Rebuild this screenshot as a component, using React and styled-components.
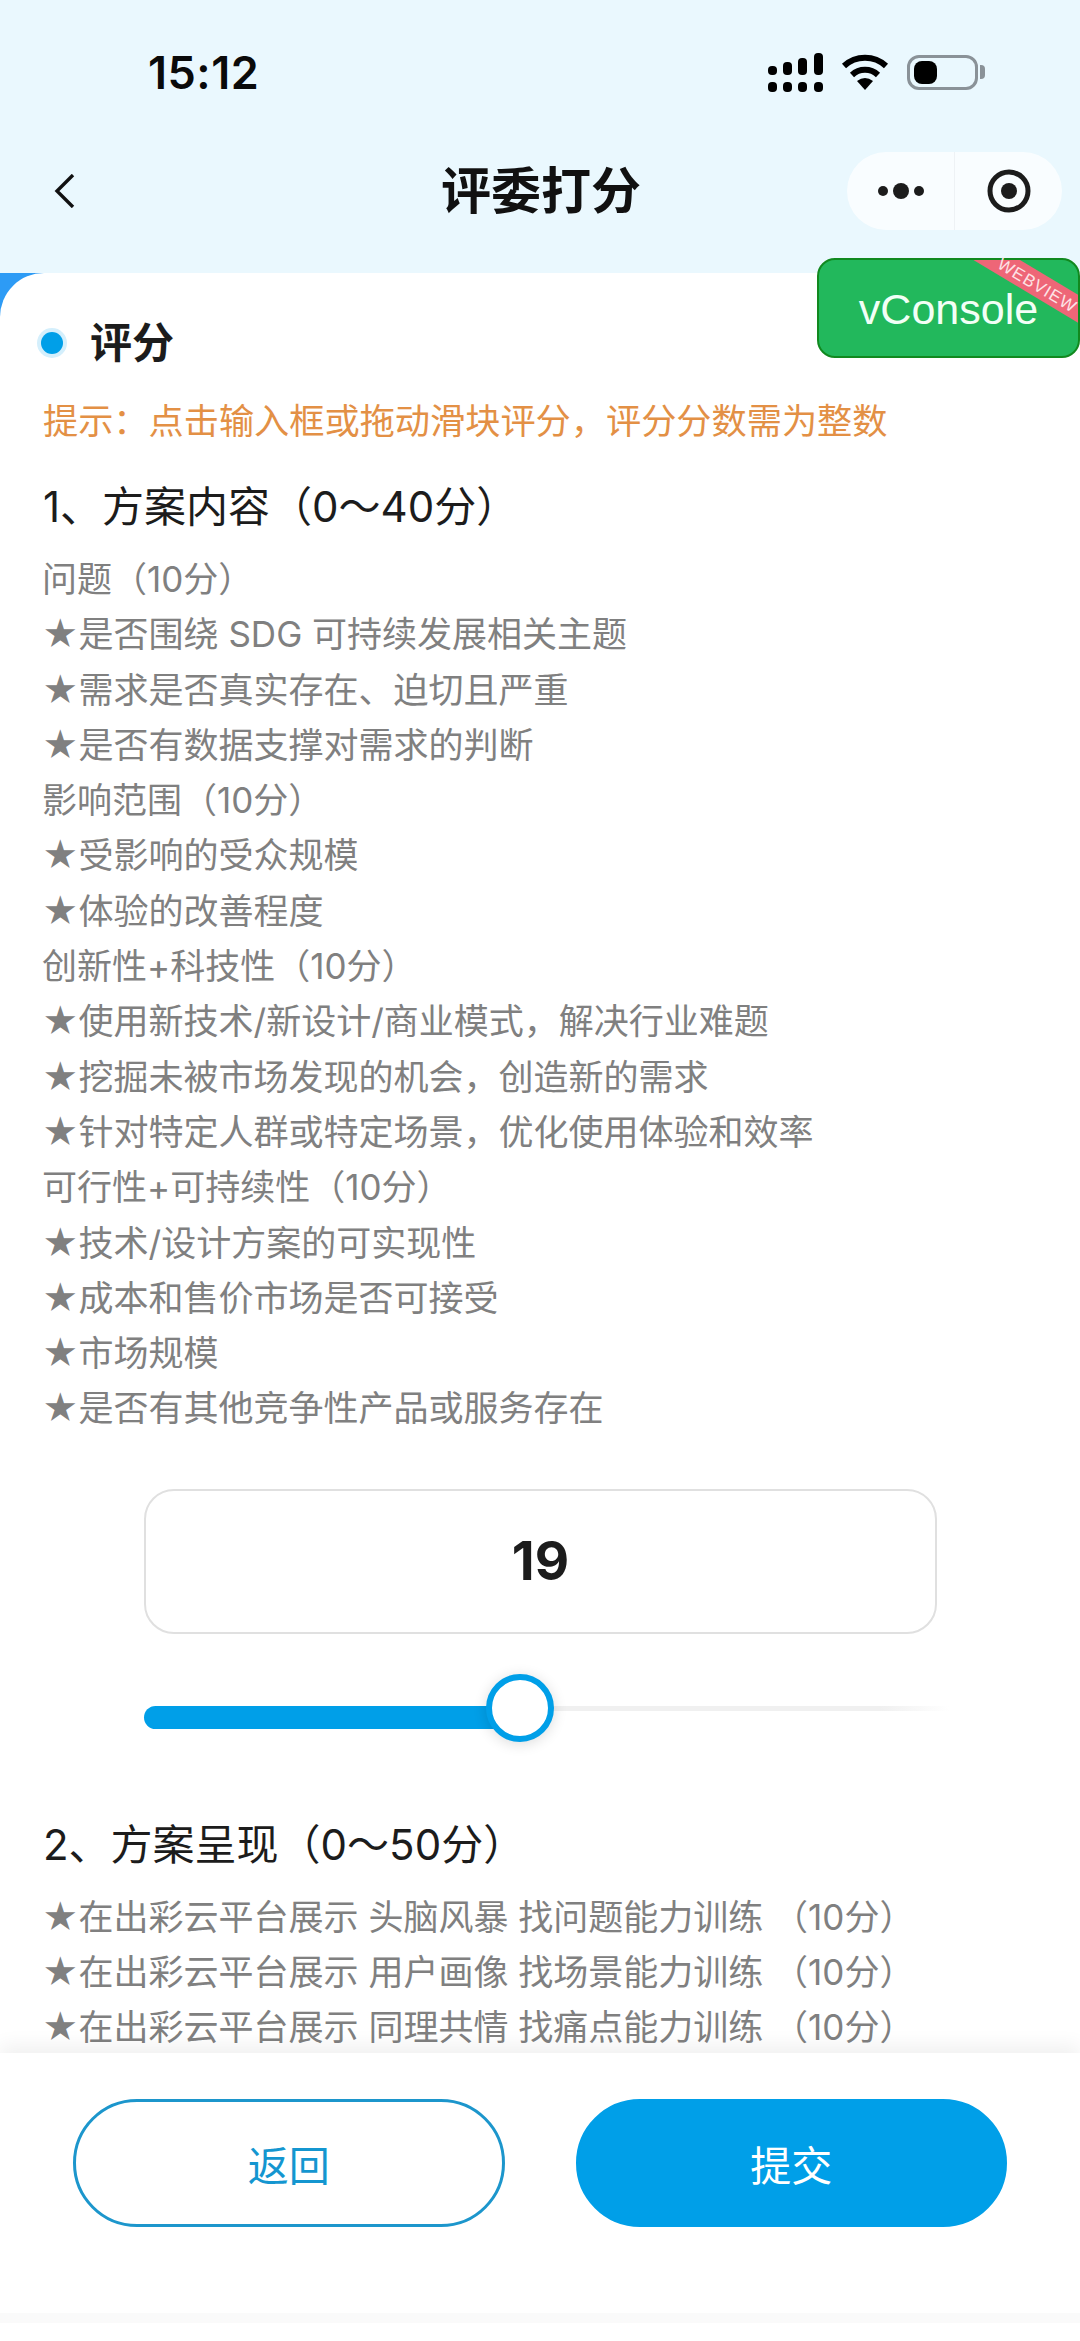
import React from 'react';
import styled, { createGlobalStyle } from 'styled-components';

const criteriaOne = [
	'问题（10分）',
	'★是否围绕 SDG 可持续发展相关主题',
	'★需求是否真实存在、迫切且严重',
	'★是否有数据支撑对需求的判断',
	'影响范围（10分）',
	'★受影响的受众规模',
	'★体验的改善程度',
	'创新性+科技性（10分）',
	'★使用新技术/新设计/商业模式，解决行业难题',
	'★挖掘未被市场发现的机会，创造新的需求',
	'★针对特定人群或特定场景，优化使用体验和效率',
	'可行性+可持续性（10分）',
	'★技术/设计方案的可实现性',
	'★成本和售价市场是否可接受',
	'★市场规模',
	'★是否有其他竞争性产品或服务存在',
];

const criteriaTwo = [
	'★在出彩云平台展示 头脑风暴 找问题能力训练 （10分）',
	'★在出彩云平台展示 用户画像 找场景能力训练 （10分）',
	'★在出彩云平台展示 同理共情 找痛点能力训练 （10分）',
];

const signalBars = [
	{ x: 0, h: 9 },
	{ x: 15, h: 13 },
	{ x: 30, h: 17 },
	{ x: 46, h: 22 },
];

export default function App() {
	return (
		<Screen>
			<GlobalStyle />
			<Header>
				<StatusBar>
					<Clock>15:12</Clock>
					<StatusIcons>
						<svg width="55" height="39" viewBox="0 0 55 39">
							{signalBars.map((bar) => (
								<g key={bar.x} fill="#000">
									<rect x={bar.x} y={22 - bar.h} width="9" height={bar.h} rx="4" />
									<rect x={bar.x} y="29" width="9" height="10" rx="4" />
								</g>
							))}
						</svg>
						<svg width="48" height="36" viewBox="0 0 48 36">
							<path d="M3 12 A31 31 0 0 1 45 12" fill="none" stroke="#000" strokeWidth="6" />
							<path d="M11 21 A19 19 0 0 1 37 21" fill="none" stroke="#000" strokeWidth="6" />
							<path d="M16 27 Q24 21 32 27 L24 36 Z" fill="#000" />
						</svg>
						<Battery>
							<BatteryLevel />
						</Battery>
					</StatusIcons>
				</StatusBar>
				<NavBar>
					<BackButton>
						<svg width="22" height="34" viewBox="0 0 22 34">
							<path d="M19 1 L3 17 L19 33" fill="none" stroke="#111" strokeWidth="3.4" />
						</svg>
					</BackButton>
					<Title>评委打分</Title>
					<Capsule>
						<CapsuleSlot>
							<svg width="48" height="18" viewBox="0 0 48 18">
								<circle cx="6" cy="9" r="5" fill="#1c1c1c" />
								<circle cx="24" cy="9" r="8" fill="#1c1c1c" />
								<circle cx="42" cy="9" r="5" fill="#1c1c1c" />
							</svg>
						</CapsuleSlot>
						<CapsuleSlot $divided>
							<svg width="44" height="44" viewBox="0 0 44 44">
								<circle cx="22" cy="22" r="19" fill="none" stroke="#1c1c1c" strokeWidth="5" />
								<circle cx="22" cy="22" r="8" fill="#1c1c1c" />
							</svg>
						</CapsuleSlot>
					</Capsule>
				</NavBar>
			</Header>
			<CardBackdrop>
				<Card>
					<Heading>
						<HeadingDot />
						评分
					</Heading>
					<Tip>提示：点击输入框或拖动滑块评分，评分分数需为整数</Tip>
					<SectionTitle>1、方案内容（0～40分）</SectionTitle>
					<Criteria>
						{criteriaOne.map((line) => (
							<li key={line}>{line}</li>
						))}
					</Criteria>
					<ScoreBox>19</ScoreBox>
					<Slider>
						<SliderFill />
						<SliderRest />
						<SliderKnob />
					</Slider>
					<SectionTitle $next>2、方案呈现（0～50分）</SectionTitle>
					<Criteria>
						{criteriaTwo.map((line) => (
							<li key={line}>{line}</li>
						))}
					</Criteria>
				</Card>
			</CardBackdrop>
			<Footer>
				<ActionButton>返回</ActionButton>
				<ActionButton $primary>提交</ActionButton>
			</Footer>
			<HomeStrip />
			<VConsole>
				<RibbonClip>
					<RibbonBand />
				</RibbonClip>
				<ConsoleLabel>vConsole</ConsoleLabel>
				<RibbonLabel>WEBVIEW</RibbonLabel>
			</VConsole>
		</Screen>
	);
}

const GlobalStyle = createGlobalStyle`
	html, body {
		margin: 0;
		padding: 0;
		background: #fff;
	}
	* {
		box-sizing: border-box;
	}
`;

const Screen = styled.div`
	color: #1c1c1c;
	display: flex;
	flex-direction: column;
	font-family: Inter, "Noto Sans CJK SC", "Noto Sans", sans-serif;
	height: 2341px;
	overflow: hidden;
	position: relative;
	width: 1080px;
`;

const Header = styled.div`
	background: #eaf8fe;
	flex: none;
	height: 273px;
`;

const StatusBar = styled.div`
	align-items: center;
	display: flex;
	height: 152px;
	justify-content: space-between;
	padding: 0 94px 8px 148px;
`;

const Clock = styled.div`
	color: #0a0a0a;
	font-size: 45px;
	font-weight: 600;
	letter-spacing: 0.5px;
`;

const StatusIcons = styled.div`
	align-items: center;
	display: flex;
	gap: 18px;
`;

const Battery = styled.div`
	border: 3px solid #8a9298;
	border-radius: 12px;
	height: 35px;
	margin-right: 8px;
	padding: 3px 4px;
	position: relative;
	width: 71px;

	&:after {
		background: #8a9298;
		border-radius: 0 4px 4px 0;
		content: '';
		height: 14px;
		position: absolute;
		right: -10px;
		top: 7px;
		width: 5px;
	}
`;

const BatteryLevel = styled.div`
	background: #000;
	border-radius: 8px;
	height: 100%;
	width: 23px;
`;

const NavBar = styled.div`
	align-items: center;
	display: grid;
	grid-template-columns: 387px auto 1fr;
	height: 78px;
	padding: 0 18px 0 54px;
`;

const BackButton = styled.div`
	display: flex;
`;

const Title = styled.div`
	color: #111;
	font-size: 50px;
	font-weight: 700;
	line-height: 78px;
`;

const Capsule = styled.div`
	background: rgba(255, 255, 255, 0.72);
	border-radius: 39px;
	display: flex;
	height: 78px;
	justify-self: end;
	width: 215px;
`;

const CapsuleSlot = styled.div`
	align-items: center;
	border-left: ${(props) => (props.$divided ? '1px solid #eef2f5' : 'none')};
	display: flex;
	flex: 1;
	justify-content: center;
`;

const CardBackdrop = styled.div`
	background: linear-gradient(90deg, #2d9bf5 0, #2d9bf5 60px, #eaf8fe 60px);
	flex: 1;
	min-height: 0;
	position: relative;
	z-index: 0;
`;

const Card = styled.div`
	background: #fff;
	border-top-left-radius: 44px;
	height: 100%;
	overflow: hidden;
	padding: 46px 44px 0;
`;

const Heading = styled.div`
	align-items: center;
	display: flex;
	font-size: 42px;
	font-weight: 700;
	gap: 27px;
	height: 48px;
	line-height: 48px;
	margin-left: -4px;
`;

const HeadingDot = styled.span`
	background: #009fe8;
	border-radius: 50%;
	box-shadow: 0 0 0 4px #d4effc;
	height: 22px;
	margin-left: 1px;
	width: 22px;
`;

const Tip = styled.div`
	color: #e39045;
	font-size: 35.2px;
	line-height: 50px;
	margin: 29px 0 0 -1px;
`;

const SectionTitle = styled.div`
	color: #1c1c1c;
	font-size: 42px;
	font-weight: 400;
	line-height: 56px;
	margin: ${(props) => (props.$next ? '75px' : '33px')} 0 0 -1px;
`;

const Criteria = styled.ul`
	color: #808080;
	font-size: 35px;
	line-height: 55.3px;
	list-style: none;
	margin: 17px 0 0 -2px;
	padding: 0;
	white-space: nowrap;
`;

const ScoreBox = styled.div`
	align-items: center;
	border: 2px solid #e0e0e0;
	border-radius: 30px;
	color: #1c1c1c;
	display: flex;
	font-size: 53px;
	font-weight: 700;
	height: 145px;
	justify-content: center;
	margin: 52px 0 0 100px;
	width: 793px;
`;

const Slider = styled.div`
	align-items: flex-start;
	display: flex;
	height: 68px;
	margin: 40px 0 0 100px;
	padding-top: 32px;
	position: relative;
	width: 805px;
`;

const SliderFill = styled.div`
	background: #009fe8;
	border-radius: 12px 0 0 12px;
	flex: none;
	height: 23px;
	width: 350px;
`;

const SliderRest = styled.div`
	background: linear-gradient(90deg, #f0f0f0 85%, #ffffff);
	flex: 1;
	height: 5px;
`;

const SliderKnob = styled.div`
	background: #fff;
	border: 6px solid #009fe8;
	border-radius: 50%;
	box-shadow: 0 2px 14px rgba(0, 0, 0, 0.14);
	height: 68px;
	left: 342px;
	position: absolute;
	top: 0;
	width: 68px;
`;

const Footer = styled.div`
	background: #fff;
	box-shadow: 0 -8px 18px rgba(0, 0, 0, 0.06);
	display: flex;
	flex: none;
	gap: 71px;
	height: 288px;
	padding: 46px 73px 0 73px;
	position: relative;
	z-index: 1;
`;

const ActionButton = styled.div`
	align-items: center;
	background: ${(props) => (props.$primary ? '#009fe8' : '#fff')};
	border: 3px solid ${(props) => (props.$primary ? '#009fe8' : '#1c96cc')};
	border-radius: 64px;
	color: ${(props) => (props.$primary ? '#fff' : '#1496d0')};
	display: flex;
	flex: 1;
	font-size: 41px;
	height: 128px;
	justify-content: center;
`;

const HomeStrip = styled.div`
	background: #fafafa;
	bottom: 18px;
	height: 10px;
	left: 0;
	position: absolute;
	right: 0;
	z-index: 2;
`;

const VConsole = styled.div`
	align-items: center;
	background: #22b85c;
	border: 2px solid #11891f;
	border-radius: 18px;
	color: #f2fff6;
	display: flex;
	font-family: "Liberation Sans", sans-serif;
	height: 100px;
	justify-content: center;
	left: 817px;
	padding: 2px 0 0 0;
	position: absolute;
	top: 258px;
	width: 263px;
	z-index: 3;
`;

const ConsoleLabel = styled.span`
	font-size: 43px;
	position: relative;
`;

const RibbonClip = styled.div`
	border-radius: 16px;
	inset: 0;
	overflow: hidden;
	position: absolute;
`;

const RibbonBand = styled.div`
	background: #ee6677;
	height: 24px;
	left: 136px;
	position: absolute;
	top: 14px;
	transform: rotate(31deg);
	width: 170px;
`;

const RibbonLabel = styled.span`
	color: #fde3e6;
	font-size: 17px;
	left: 218px;
	letter-spacing: 1px;
	line-height: 18px;
	position: absolute;
	top: 26px;
	transform: translate(-50%, -50%) rotate(31deg);
	white-space: nowrap;
`;
